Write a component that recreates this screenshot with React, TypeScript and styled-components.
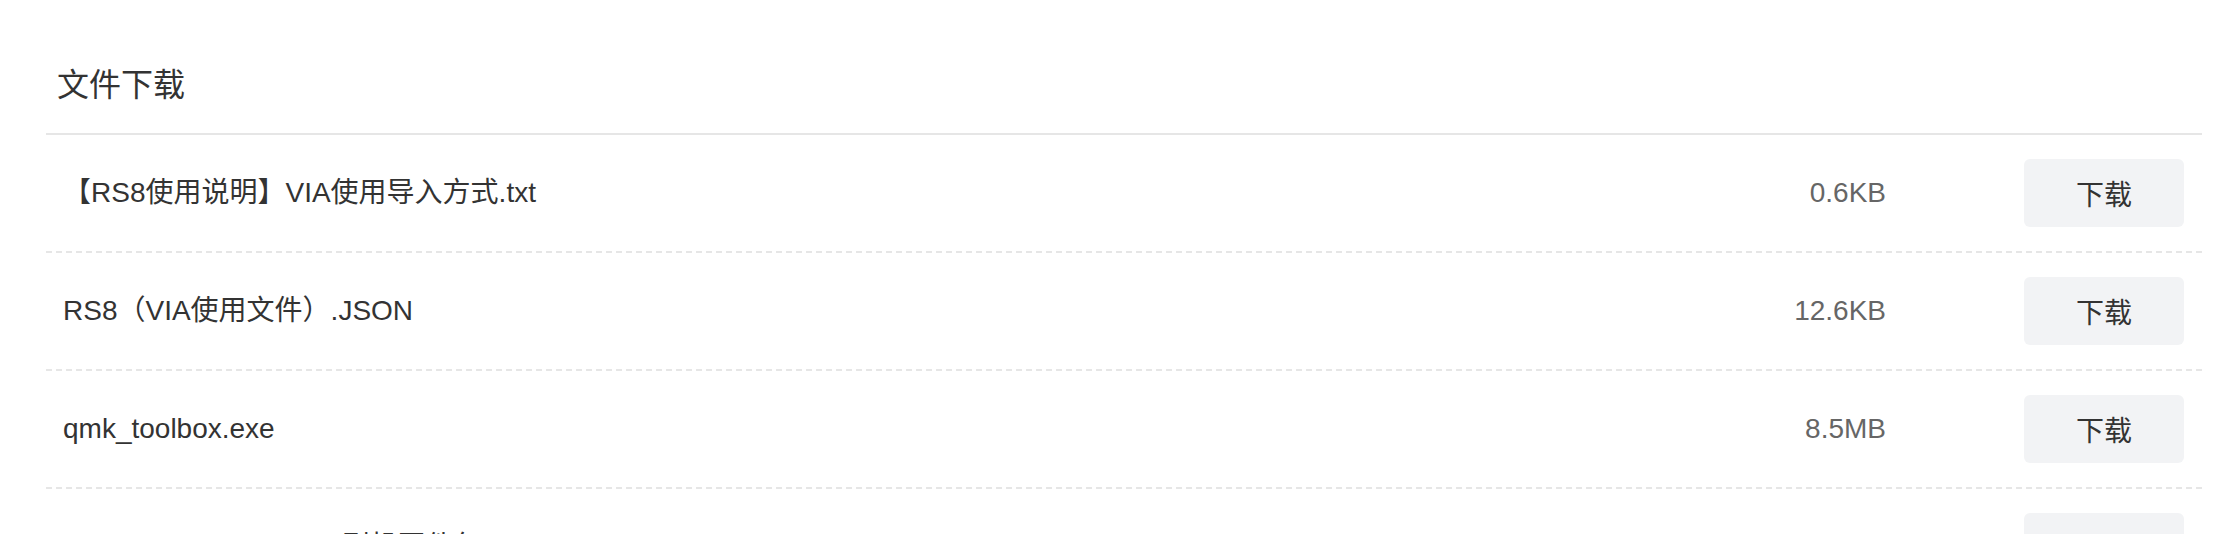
import styled, { createGlobalStyle } from 'styled-components'

interface FileItem {
	name: string
	size: string
}

const files: FileItem[] = [
	{ name: '【RS8使用说明】VIA使用导入方式.txt', size: '0.6KB' },
	{ name: 'RS8（VIA使用文件）.JSON', size: '12.6KB' },
	{ name: 'qmk_toolbox.exe', size: '8.5MB' },
	{ name: 'RS8_VIA_Firmware_1刷机固件包.bin', size: '56.3KB' },
]

const GlobalStyle = createGlobalStyle`
	html,
	body {
		margin: 0;
		padding: 0;
		background: #fff;
		overflow: hidden;
	}

	body {
		font-family: 'Liberation Sans', 'Noto Sans CJK SC', sans-serif;
		color: #333;
	}
`

const Section = styled.section`
	padding: 0 30px 0 46px;
`

const Header = styled.h2`
	margin: 0;
	padding: 61px 0 24px 11px;
	font-size: 32px;
	line-height: 48px;
	font-weight: 400;
	color: #333;
	border-bottom: 2px solid #e6e6e6;
`

const List = styled.ul`
	margin: 0;
	padding: 0;
	list-style: none;
`

const Row = styled.li`
	display: grid;
	grid-template-columns: 1fr auto 160px;
	align-items: center;
	height: 116px;
	padding: 0 18px 0 17px;
	border-bottom: 2px dashed #e6e6e6;
`

const FileName = styled.span`
	font-size: 28px;
	line-height: 40px;
	color: #333;
	white-space: nowrap;
`

const FileSize = styled.span`
	padding-right: 138px;
	font-size: 28px;
	line-height: 40px;
	color: #666;
	text-align: right;
`

const DownloadButton = styled.button`
	width: 160px;
	height: 68px;
	border: none;
	border-radius: 6px;
	background: #f2f3f5;
	color: #333;
	font-family: inherit;
	font-size: 28px;
	cursor: pointer;
`

export default function App() {
	return (
		<>
			<GlobalStyle />
			<Section>
				<Header>文件下载</Header>
				<List>
					{files.map((file) => (
						<Row key={file.name}>
							<FileName>{file.name}</FileName>
							<FileSize>{file.size}</FileSize>
							<DownloadButton>下载</DownloadButton>
						</Row>
					))}
				</List>
			</Section>
		</>
	)
}
